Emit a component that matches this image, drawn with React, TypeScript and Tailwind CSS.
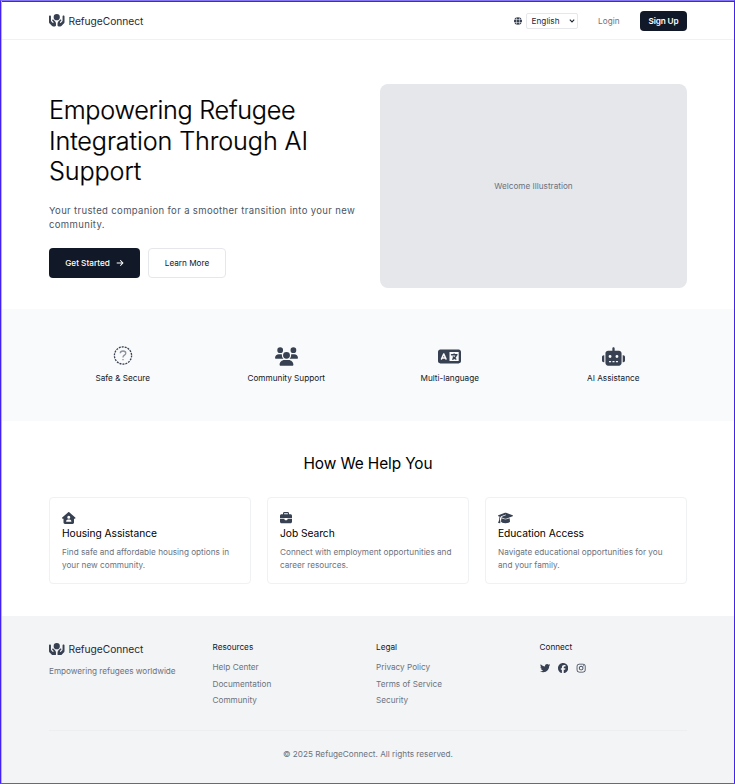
import type { ReactNode } from "react";
import {
  FaHandsHoldingCircle,
  FaGlobe,
  FaArrowRight,
  FaUsers,
  FaLanguage,
  FaRobot,
  FaHouseUser,
  FaBriefcase,
  FaGraduationCap,
  FaTwitter,
  FaFacebook,
  FaInstagram,
} from "react-icons/fa6";

function Logo() {
  return (
    <div className="flex h-[14px] items-center gap-[4px]">
      <FaHandsHoldingCircle className="h-[12.5px] w-[15.5px] text-[#374151]" />
      <span className="text-[10.25px] leading-[14px] tracking-[-0.05px] text-[#1f2937]">RefugeConnect</span>
    </div>
  );
}

function DashedQuestion() {
  return (
    <svg viewBox="0 0 20 20" className="h-[20px] w-[20px]" fill="none">
      <circle cx="10" cy="9.5" r="8.6" stroke="#374151" strokeWidth="1.3" strokeDasharray="2 1" />
      <path
        d="M7.3 7.2C7.3 5.7 8.4 5 10 5s2.8.9 2.8 2.2c0 1.9-2.8 2-2.8 4v.4M10 12.9v1.3"
        stroke="#8b929d"
        strokeWidth="1.3"
      />
    </svg>
  );
}

function Feature({ icon, label }: { icon: ReactNode; label: string }) {
  return (
    <div className="flex flex-col items-center">
      <div className="flex h-[20px] items-center text-[#374151]">{icon}</div>
      <span className="mt-[6px] text-[8.2px] leading-[12px] text-[#111827]">{label}</span>
    </div>
  );
}

function HelpCard({ icon, title, lines }: { icon: ReactNode; title: string; lines: string[] }) {
  return (
    <article className="h-[87px] rounded-[4px] border border-[#f0f1f3] px-[12px] pt-[13px]">
      <div className="flex h-[13px] items-center text-[#374151]">{icon}</div>
      <h3 className="mt-[2px] text-[10.25px] leading-[14px] tracking-[-0.05px] text-black">{title}</h3>
      <p className="mt-[6px] text-[8.2px] leading-[13px] whitespace-nowrap text-[#6b7280]">
        {lines[0]}
        <br />
        {lines[1]}
      </p>
    </article>
  );
}

function FooterLinks({ title, links }: { title: string; links: string[] }) {
  return (
    <div>
      <h4 className="text-[8.2px] leading-[12px] text-[#111827]">{title}</h4>
      <ul className="mt-[6px] text-[8.2px] leading-[16.5px] text-[#6b7280]">
        {links.map((link) => (
          <li key={link}>{link}</li>
        ))}
      </ul>
    </div>
  );
}

export default function App() {
  return (
    <div className="h-[784px] w-[735px] border border-[#4322f0] border-t-[#8577f3] border-b-[#6b50f5] bg-[#b5aafa] pl-px">
      <div className="flex h-full flex-col border-t border-[#4322f0] bg-white font-['Inter',sans-serif]">
        <header className="flex h-[38px] shrink-0 items-center justify-between border-b border-[#f0f1f3] px-[47px]">
          <Logo />
          <div className="flex items-center text-[8.2px] leading-[12px]">
            <FaGlobe className="h-[8px] w-[8px] text-[#374151]" />
            <button className="ml-[4px] flex h-[16px] w-[52px] items-center justify-between rounded-[2px] border border-[#e5e7eb] pr-[2px] pl-[5px] text-[#1f2937]">
              English
              <svg viewBox="0 0 6 4" className="h-[4px] w-[6px]" fill="none" stroke="#1f2937" strokeWidth="1.1">
                <path d="M.8.6 3 2.9 5.2.6" />
              </svg>
            </button>
            <a className="ml-[20.5px] text-[#6b7280]">Login</a>
            <button className="ml-[20.5px] h-[20px] w-[47px] rounded-[4px] bg-[#111827] font-semibold tracking-[-0.1px] text-white">
              Sign Up
            </button>
          </div>
        </header>

        <section className="flex h-[269px] shrink-0 justify-between px-[47px]">
          <div className="pt-[55px]">
            <h1 className="text-[25.2px] leading-[30.7px] font-light tracking-[-0.12px] whitespace-nowrap text-black [-webkit-text-stroke:0.2px_black]">
              <span className="tracking-[-0.3px]">Empowering Refugee</span>
              <br />
              Integration Through AI
              <br />
              Support
            </h1>
            <p className="mt-[17px] text-[9.5px] leading-[14px] tracking-[0.36px] whitespace-nowrap text-[#4b5563]">
              Your trusted companion for a smoother transition into your new
              <br />
              community.
            </p>
            <div className="mt-[16px] flex gap-[8px] text-[8.2px]">
              <button className="flex h-[30px] w-[91px] items-center justify-center gap-[6px] rounded-[4px] bg-[#111827] font-medium text-white">
                Get Started
                <FaArrowRight className="h-[8px] w-[8px]" />
              </button>
              <button className="h-[30px] w-[78px] rounded-[4px] border border-[#e5e7eb] text-[#111827]">Learn More</button>
            </div>
          </div>
          <div className="mt-[44px] flex h-[204px] w-[307px] items-center justify-center rounded-[8px] bg-[#e5e7eb] text-[8.2px] text-[#6b7280]">
            Welcome Illustration
          </div>
        </section>

        <section className="grid h-[112px] shrink-0 grid-cols-4 gap-[16px] bg-[#f9fafb] px-[47px] pt-[37px]">
          <Feature icon={<DashedQuestion />} label="Safe & Secure" />
          <Feature icon={<FaUsers className="h-[19px] w-[23px]" />} label="Community Support" />
          <Feature icon={<FaLanguage className="h-[19px] w-[23px]" />} label="Multi-language" />
          <Feature icon={<FaRobot className="h-[19px] w-[23px]" />} label="AI Assistance" />
        </section>

        <section className="h-[195px] shrink-0 px-[47px] pt-[32px]">
          <h2 className="text-center text-[15.4px] leading-[22px] tracking-[-0.1px] text-black">How We Help You</h2>
          <div className="mt-[22px] grid grid-cols-3 gap-[16px]">
            <HelpCard
              icon={<FaHouseUser className="h-[12px] w-[13.5px]" />}
              title="Housing Assistance"
              lines={["Find safe and affordable housing options in", "your new community."]}
            />
            <HelpCard
              icon={<FaBriefcase className="h-[12px] w-[12px]" />}
              title="Job Search"
              lines={["Connect with employment opportunities and", "career resources."]}
            />
            <HelpCard
              icon={<FaGraduationCap className="h-[12px] w-[15px]" />}
              title="Education Access"
              lines={["Navigate educational opportunities for you", "and your family."]}
            />
          </div>
        </section>

        <footer className="min-h-0 flex-1 bg-[#f3f4f6] px-[47px] pt-[25px]">
          <div className="grid h-[89px] grid-cols-4 gap-[16px]">
            <div className="pt-[1px]">
              <Logo />
              <p className="mt-[9px] text-[8.2px] leading-[12px] tracking-[-0.03px] whitespace-nowrap text-[#6b7280]">
                Empowering refugees worldwide
              </p>
            </div>
            <FooterLinks title="Resources" links={["Help Center", "Documentation", "Community"]} />
            <FooterLinks title="Legal" links={["Privacy Policy", "Terms of Service", "Security"]} />
            <div>
              <h4 className="text-[8.2px] leading-[12px] text-[#111827]">Connect</h4>
              <div className="mt-[10px] flex gap-[8px] text-[10.25px] text-[#374151]">
                <FaTwitter />
                <FaFacebook />
                <FaInstagram />
              </div>
            </div>
          </div>
          <div className="border-t border-[#eceef0] pt-[17px] text-center text-[8.2px] leading-[12px] text-[#6b7280]">
            © 2025 RefugeConnect. All rights reserved.
          </div>
        </footer>
      </div>
    </div>
  );
}
